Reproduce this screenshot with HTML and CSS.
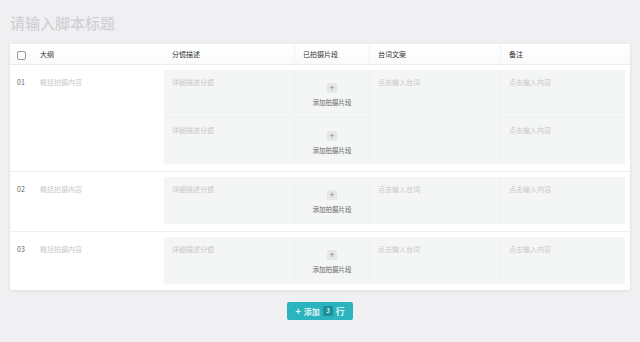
FILE: index.html
```html
<!DOCTYPE html>
<html lang="zh">
<head>
    <meta charset="utf-8"/>
    <title>脚本</title>
    <link rel="stylesheet" href="styles.css">
</head>
<body>
    <h1 class="title">请输入脚本标题</h1>

    <div class="card">
        <!-- header -->
        <div class="row head">
            <div class="c-check"><span class="box"></span></div>
            <div class="c-outline">大纲</div>
            <div class="h-cell">分镜描述</div>
            <div class="h-cell sep">已拍摄片段</div>
            <div class="h-cell sep">台词文案</div>
            <div class="h-cell sep">备注</div>
        </div>

        <!-- row 01 -->
        <div class="row">
            <div class="c-check num">01</div>
            <div class="c-outline ph">概括拍摄内容</div>
            <div class="block">
                <div class="cell ph">详细描述分镜</div>
                <div class="cell clip"><span class="plus">+</span><span class="add">添加拍摄片段</span></div>
                <div class="cell ph span2">点击输入台词</div>
                <div class="cell ph">点击输入内容</div>
                <div class="cell ph top">详细描述分镜</div>
                <div class="cell clip top"><span class="plus">+</span><span class="add">添加拍摄片段</span></div>
                <div class="cell ph top">点击输入内容</div>
            </div>
        </div>

        <!-- row 02 -->
        <div class="row">
            <div class="c-check num">02</div>
            <div class="c-outline ph">概括拍摄内容</div>
            <div class="block">
                <div class="cell ph">详细描述分镜</div>
                <div class="cell clip"><span class="plus">+</span><span class="add">添加拍摄片段</span></div>
                <div class="cell ph">点击输入台词</div>
                <div class="cell ph">点击输入内容</div>
            </div>
        </div>

        <!-- row 03 -->
        <div class="row">
            <div class="c-check num">03</div>
            <div class="c-outline ph">概括拍摄内容</div>
            <div class="block">
                <div class="cell ph">详细描述分镜</div>
                <div class="cell clip"><span class="plus">+</span><span class="add">添加拍摄片段</span></div>
                <div class="cell ph">点击输入台词</div>
                <div class="cell ph">点击输入内容</div>
            </div>
        </div>
    </div>

    <div class="foot">
        <button class="add-btn"><span class="ico">+</span> 添加 <span class="count">3</span> <span class="unit">行</span></button>
    </div>
</body>
</html>
```

FILE: styles.css
```css
html, body {
    margin: 0;
    padding: 0;
}
body {
    background: #f0f0f2;
    font-family: "Noto Sans CJK SC", "Noto Sans", sans-serif;
    color: #333;
    padding: 0 10px;
    height: 342px;
    overflow: hidden;
}
.title {
    margin: 0;
    padding-top: 13px;
    height: 31px;
    font-size: 15px;
    line-height: 20px;
    font-weight: 500;
    color: #d0d0d4;
}
.card {
    background: #fff;
    box-shadow: 0 1px 4px rgba(0,0,0,0.08);
    border-radius: 2px;
}
.row {
    display: flex;
    border-bottom: 1px solid #eeeff0;
    font-size: 7px;
}
.row:last-child {
    border-bottom: none;
}
.row:last-child .block {
    margin-bottom: 6px;
}
.head {
    height: 20px;
    background: linear-gradient(#fff, #fafafa);
    color: #333;
    border-bottom: 1px solid #ebebec;
    display: grid;
    grid-template-columns: 22px 132px 130px 75px 131px 1fr;
}
.head > div {
    line-height: 20px;
    padding-left: 8px;
    box-sizing: border-box;
}
.head > .c-check {
    padding-left: 7px;
}
.head .sep {
    border-left: 1px solid #f2f2f2;
}
.c-check {
    width: 22px;
    padding-left: 7px;
    box-sizing: border-box;
}
.c-outline {
    width: 132px;
    padding-left: 8px;
    box-sizing: border-box;
}
.box {
    display: inline-block;
    width: 7px;
    height: 7px;
    border: 1px solid #9a9a9a;
    border-radius: 2px;
    vertical-align: middle;
}
.num {
    color: #666;
    padding-top: 12px;
}
.row > .c-outline.ph {
    padding-top: 12px;
}
.ph {
    color: #c8c8c8;
}
.block {
    flex: 1;
    margin: 5px 5px 7px 0;
    background: #f4f5f5;
    display: grid;
    grid-template-columns: 130px 75px 131px 1fr;
    grid-auto-rows: 47px;
}
.cell {
    padding: 7px 0 0 8px;
    box-sizing: border-box;
}
.cell + .cell {
    border-left: 1px solid #eff0f0;
}
.cell.top {
    border-top: 1px solid #eff0f0;
}
.cell.top:nth-child(5) {
    border-left: none;
}
.span2 {
    grid-row: span 2;
}
.clip {
    display: flex;
    flex-direction: column;
    align-items: center;
    justify-content: center;
    padding: 0;
}
.plus {
    width: 10px;
    height: 10px;
    line-height: 10px;
    text-align: center;
    background: #e6e7e8;
    color: #888;
    font-size: 9px;
    border-radius: 1px;
    margin-top: 3px;
}
.add {
    color: #666;
    font-size: 6.5px;
    margin-top: 4px;
}
.foot {
    display: flex;
    justify-content: center;
    padding-top: 12px;
}
.add-btn {
    height: 18px;
    padding: 0 8px;
    border: none;
    border-radius: 2px;
    background: #2bb3be;
    color: #fff;
    font-family: "Noto Sans CJK SC", sans-serif;
    font-size: 8px;
    font-weight: 500;
    display: flex;
    align-items: center;
    gap: 3px;
}
.ico {
    font-size: 10px;
    line-height: 10px;
}
.unit {
    font-size: 9px;
}
.count {
    display: inline-block;
    width: 10px;
    height: 10px;
    line-height: 10px;
    text-align: center;
    background: #1c8f98;
    font-size: 6px;
    border-radius: 1px;
}
```
